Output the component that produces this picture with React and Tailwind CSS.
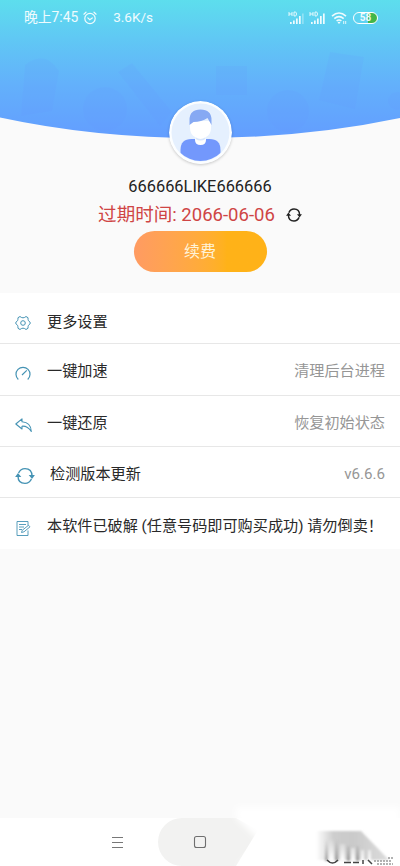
import React from "react";

const iconClass = "shrink-0 text-[#4593b4]";

// Status bar icons
const AlarmIcon = () => (
  <svg width="14" height="14" viewBox="0 0 14 14" fill="none" stroke="currentColor" strokeWidth="1.2" strokeLinecap="round">
    <circle cx="7" cy="7.5" r="5.2" />
    <path d="M4.8 6.9 6.8 8.8 9.3 6.9M.9 3.2 3 1.2M13.1 3.2 11 1.2" />
  </svg>
);

const SignalIcon = ({ dim }) => (
  <svg width="17" height="14" viewBox="0 0 17 14" fill="currentColor">
    <path d="M1 1v4M4 1v4M1 3h3M6 1v4h1.2q1.3 0 1.3-2T7.2 1z" fill="none" stroke="currentColor" strokeWidth=".9" />
    <path d="M2 11h1.7v2H2zM5 9.5h1.7V13H5zM8 7.5h1.7V13H8zM11 5h1.7v8H11z" />
    <path d="M14 2.5h1.7V13H14z" opacity={dim ? 0.35 : 1} />
  </svg>
);

const WifiIcon = () => (
  <svg width="17" height="14" viewBox="0 0 17 14" fill="none" stroke="currentColor" strokeWidth="1.6">
    <path d="M1 5.2q7-6.4 14 0M3.3 7.7q4.7-4.2 9.4 0M5.6 10q2.4-2 4.8 0" />
    <path d="m8 13-1.5-1.7q1.5-1 3 0z" fill="currentColor" stroke="none" />
    <path d="M12.7 13v-3M14.7 10v3" strokeWidth=".9" />
  </svg>
);

const StatusBar = () => (
  <div className="flex h-9 items-center pl-6 pr-[22px] text-[13.8px] leading-none text-white/90">
    <span>晚上7:45</span>
    <span className="ml-[5px]"><AlarmIcon /></span>
    <span className="ml-4 text-[13.5px]">3.6K/s</span>
    <div className="ml-auto flex items-center">
      <SignalIcon dim />
      <span className="ml-1"><SignalIcon /></span>
      <span className="ml-[5px]"><WifiIcon /></span>
      <span className="ml-[5px] flex h-[12px] w-[25px] items-center justify-center rounded-full border border-white bg-linear-to-r from-transparent from-60% to-[#42b649] to-60% text-[10px] font-bold">
        58
      </span>
    </div>
  </div>
);

// Blue banner with the curved lower edge
const Banner = () => (
  <div className="relative h-[138px]">
    <svg className="absolute inset-0" width="400" height="138" viewBox="0 0 400 138">
      <defs>
        <linearGradient id="sky" x1="0" y1="0" x2="0" y2="1">
          <stop offset="0" stopColor="#5ddeed" />
          <stop offset=".28" stopColor="#60c8f4" />
          <stop offset=".6" stopColor="#63b1fb" />
          <stop offset="1" stopColor="#639dff" />
        </linearGradient>
      </defs>
      <path d="M0 0h400v118Q305 138 200 138 95 138 0 117.5z" fill="url(#sky)" />
      <g fill="#6495ff" opacity=".12">
        <circle cx="105" cy="109" r="22" />
        <circle cx="288" cy="111" r="21" />
        <path d="m118 72 14-9 40 49-12 14zM330 52l34 5-9 52-36-9zM25 65q20-16 34 6l-7 40-31 5zM216 66h31v29h-31z" />
        <circle cx="397" cy="101" r="9" />
      </g>
    </svg>
    <div className="relative">
      <StatusBar />
    </div>
  </div>
);

const Avatar = () => (
  <svg className="relative -mt-[37px] shrink-0 rounded-full shadow-[0_1px_3px_#0003]" width="63" height="63" viewBox="0 0 63 63">
    <defs>
      <clipPath id="face"><circle cx="31.5" cy="31.5" r="28.5" /></clipPath>
    </defs>
    <circle cx="31.5" cy="31.5" r="31.5" fill="#fcfeff" />
    <circle cx="31.5" cy="31.5" r="29" fill="#e5f0fe" />
    <g clipPath="url(#face)">
      <path d="M11.5 62V49q0-11 11-11h18q11 0 11 11v13z" fill="#7398fc" />
      <path d="M26 34h11v5q0 5-5.5 5T26 39z" fill="#fff" />
      <path d="M26.5 36q5 4 10 0v2q-5 3-10 0z" fill="#d9e7fb" />
      <path d="M21 20h21v6q0 11-10.5 11T21 26z" fill="#fff" />
      <path d="M20.5 24V19q0-10.5 11-10.5T42.5 19v5l-4-7q-6 4-14 4z" fill="#86a9f3" />
    </g>
  </svg>
);

const RefreshIcon = ({ size, className, width = 1.6 }) => (
  <svg className={className} width={size} height={size} viewBox="0 0 20 20" fill="none" stroke="currentColor" strokeWidth={width}>
    <path d="M3.6 7Q5.500 2.600 10 2.600q7 0 7 7.400M16.400 13Q14.500 17.400 10 17.400q-7 0-7-7.400" />
    <path d="M13.700 9h6.200L17 13zM.1 11h6.200L3 7z" fill="currentColor" stroke="none" />
  </svg>
);

const SettingsIcon = () => (
  <svg className={`${iconClass} -mt-[4px]`} width="16" height="16" viewBox="0 0 16 16" fill="none" stroke="currentColor" strokeWidth="1" strokeLinejoin="round">
    <path d="m5 1.500 1.300.900q1.700.900 3.400 0l1.300-.900 2 1.200.1 1.800q.1 1.400 1 1.800l1 .8v1.800l-1 .8q-.9.4-1 1.800l-.1 1.800-2 1.200-1.300-.9q-1.700-.9-3.400 0L5 14.500l-2-1.200-.1-1.800q-.1-1.400-1-1.800l-1-.8V7.100l1-.8q.9-.4 1-1.800L3 2.700z" />
    <circle cx="8" cy="8" r="2.300" />
  </svg>
);

const SpeedIcon = () => (
  <svg className={`${iconClass} -mt-px`} width="16" height="16" viewBox="0 0 16 16" fill="none" stroke="currentColor" strokeWidth="1.2">
    <path d="M3.300 14.500A7 7 0 1 1 12.700 14.500M7 10l4.800-4.600" />
  </svg>
);

const UndoIcon = () => (
  <svg className={`${iconClass} -mt-px`} width="18" height="16" viewBox="0 0 18 16" fill="none" stroke="currentColor" strokeWidth="1.1" strokeLinejoin="round">
    <path d="M7 1.800.8 7 7 12V9.200q5.500-.5 9.300 5.300Q16 5.500 7 4.800z" />
  </svg>
);

const NoteIcon = () => (
  <svg className={iconClass} width="16" height="17" viewBox="0 0 16 17" fill="none" stroke="currentColor" strokeWidth=".9">
    <path d="M13 5.500V1.500H2v14h11V10.500M4 4.500h7M4 7h5M4 9.500h3" />
    <path d="m6.500 12.500.7-2.200 6.300-5 1.500 1.500-6 5z" />
  </svg>
);

const rows = [
  { icon: <SettingsIcon />, label: "更多设置", height: "h-[51px] pt-[9px]" },
  { icon: <SpeedIcon />, label: "一键加速", value: "清理后台进程", height: "h-[52px] pt-1" },
  { icon: <UndoIcon />, label: "一键还原", value: "恢复初始状态", height: "h-[51px] pt-1" },
  {
    icon: <RefreshIcon size={20} width={1.4} className={iconClass} />,
    label: "检测版本更新",
    value: "v6.6.6",
    height: "h-[51px] pt-1",
    wide: true,
  },
  { icon: <NoteIcon />, label: "本软件已破解 (任意号码即可购买成功) 请勿倒卖！", height: "h-[51px] pt-[5px]" },
];

const MenuRow = ({ icon, label, value, height, wide }) => (
  <div className={`flex items-center border-b border-[#e7e7e7] pl-[15px] pr-[15px] text-[15.15px] last:border-b-0 ${height}`}>
    <div className={wide ? "w-[35px] pt-1" : "w-8 pt-1"}>{icon}</div>
    <span className="whitespace-nowrap text-[#292929]">{label}</span>
    {value && <span className="ml-auto text-[#969696]">{value}</span>}
  </div>
);

const NavBar = () => (
  <div className="relative flex h-12 items-center bg-white">
    <div className="ml-[112px] flex w-[11px] flex-col gap-1">
      <div className="h-px bg-[#777]" />
      <div className="h-px bg-[#777]" />
      <div className="h-px bg-[#777]" />
    </div>
    <svg className="absolute bottom-0 left-[158px]" width="242" height="66" viewBox="0 0 242 66">
      <defs>
        <filter id="soft"><feGaussianBlur stdDeviation="3" /></filter>
        <filter id="smear"><feGaussianBlur stdDeviation=".9" /></filter>
        <linearGradient id="smudge" x1="0" y1="0" x2="1" y2="0">
          <stop offset="0" stopColor="#fff" />
          <stop offset=".24" stopColor="#cdcdcd" />
          <stop offset=".5" stopColor="#cacaca" />
          <stop offset="1" stopColor="#dcdcdc" />
        </linearGradient>
        <linearGradient id="streak" x1="0" y1="0" x2="0" y2="1">
          <stop offset="0" stopColor="#999" stopOpacity="0" />
          <stop offset="1" stopColor="#888" stopOpacity=".7" />
        </linearGradient>
        <linearGradient id="fade" x1="0" y1="0" x2="0" y2="1">
          <stop offset="0" stopColor="#fff" stopOpacity="0" />
          <stop offset="1" stopColor="#fff" />
        </linearGradient>
      </defs>
      <path d="M24 18h54l22 12-22 36H24a24 24 0 0 1 0-48z" fill="#f2f2f1" />
      <path d="M78 7h164v59H79l20-19q5-5-1-10L78 18z" fill="#fff" filter="url(#soft)" />
      <rect x="36.5" y="36.5" width="11" height="11" rx="2" fill="none" stroke="#6f6f6f" strokeWidth="1.1" />
      <path d="M158 31h45l28 29h-73z" fill="url(#smudge)" filter="url(#smear)" />
      <g filter="url(#smear)">
        <path d="M167 40h3v21h-3zM177 40h3v21h-3zM189 46h3v15h-3zM198 46h3v15h-3z" fill="url(#streak)" />
        <path d="M171 38h5v23h-5zM182 44h5v17h-5zM193 48h4v13h-4zM203 50h3v11h-3zM210 50h3v11h-3z" fill="url(#fade)" />
      </g>
      <g fill="none" stroke="#444" strokeWidth="1.5">
        <path d="M169 60q5.500 6 11 0M186 62.500h7M195 62.500h6M205 60v4M210 60l4 4" />
        <path d="M216 61h18M219 64h16M230 58h5" stroke="#999" strokeDasharray="2 1" />
      </g>
    </svg>
  </div>
);

export default function App() {
  return (
    <div className="flex h-[866px] w-[400px] flex-col overflow-hidden bg-[#fafafa] font-[Roboto,'Noto_Sans_CJK_SC',sans-serif]">
      <Banner />
      <div className="flex h-[155px] flex-col items-center">
        <Avatar />
        <div className="mt-3 text-[16.4px] leading-[22px] text-[#222]">666666LIKE666666</div>
        <div className="mt-[3px] flex items-center gap-[11px] text-[18.55px] leading-7 text-[#cf4545]">
          <span>过期时间: 2066-06-06</span>
          <RefreshIcon size={16} width={1.8} className="text-[#222]" />
        </div>
        <button className="mt-[2px] h-[41px] w-[133px] shrink-0 rounded-full bg-linear-to-r from-[#ff9b62] to-[#ffb218] to-70% text-[16px] text-[#fff3d8]">
          续费
        </button>
      </div>
      <div className="bg-white">
        {rows.map((row) => (
          <MenuRow key={row.label} {...row} />
        ))}
      </div>
      <div className="flex-1" />
      <NavBar />
    </div>
  );
}
